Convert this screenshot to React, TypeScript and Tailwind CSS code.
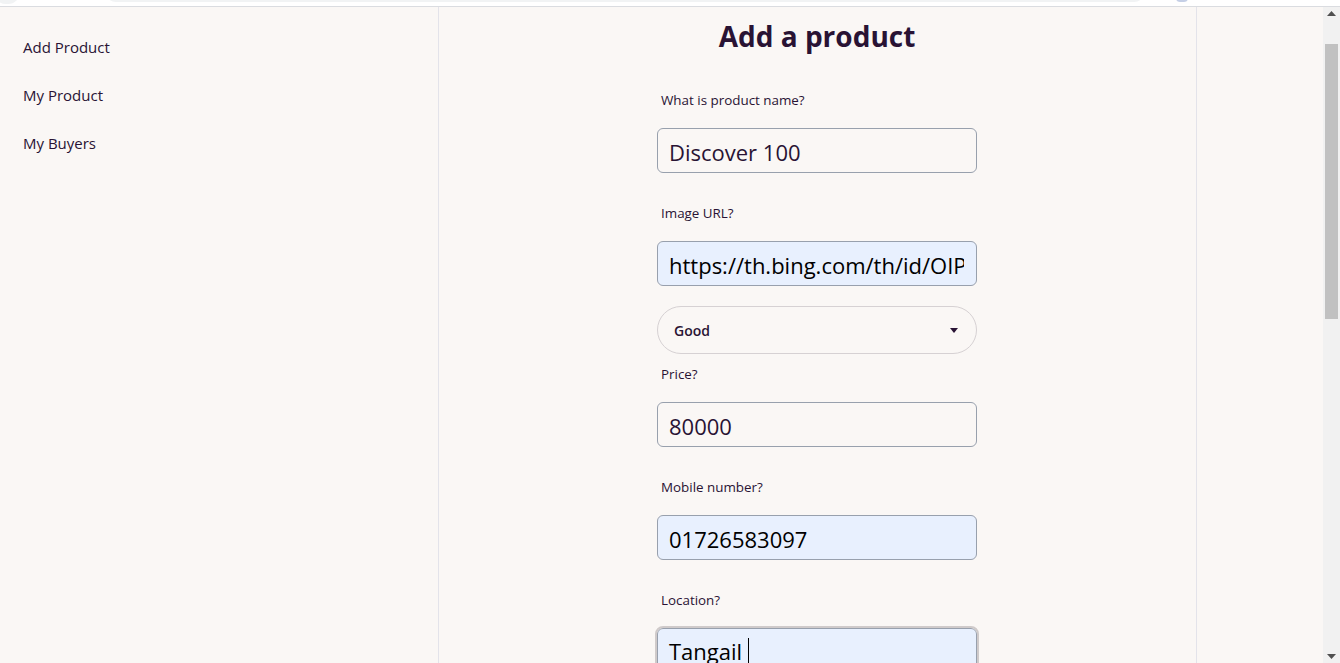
import React from "react";

const labelCls = "h-9 flex items-center px-1 pt-px text-[13.4px] text-[#291334]";
const inputBase =
  "block w-full h-[45px] rounded-md border border-[#98a0ad] pl-[11px] pr-3 pt-[2px] text-[22px] outline-none";

function Field({ label, value, filled }: { label: string; value: string; filled?: boolean }) {
  return (
    <div className="flex flex-col">
      <label className={labelCls}>{label}</label>
      <input
        readOnly
        value={value}
        className={`${inputBase} mt-[10px] ${filled ? "bg-[#e8f0fe] text-black" : "bg-[#faf7f5] text-[#291334]"}`}
      />
    </div>
  );
}

export default function App() {
  return (
    <div className="w-[1340px] h-[663px] overflow-hidden bg-[#faf7f5] font-['Open_Sans',sans-serif] text-[#291334]">
      {/* browser chrome remnant */}
      <div className="relative h-[7px] bg-white border-b border-[#dadce0] overflow-hidden">
        <div className="absolute left-[-6px] top-[-20px] w-[26px] h-[24px] rounded-full bg-[#f1f3f4]" />
        <div className="absolute left-[105px] top-[-20px] w-[1040px] h-[22px] rounded-full bg-[#f1f3f4]" />
        <div className="absolute left-[1176px] top-[-6px] w-[12px] h-[8px] rounded-sm bg-[#c5cfe6]" />
      </div>

      <div className="flex h-[656px]">
        <div className="flex flex-1">
          {/* sidebar */}
          <aside className="w-[439px] border-r border-[#e3e3ea] pt-4 flex flex-col">
            {["Add Product", "My Product", "My Buyers"].map((item) => (
              <a key={item} className="h-12 flex items-center pl-[23px] text-[15px] text-[#291334]">
                {item}
              </a>
            ))}
          </aside>

          {/* main */}
          <main className="w-[758px] border-r border-[#e3e3ea] flex flex-col items-center pt-[11px] pr-px">
            <h1 className="text-[28px] leading-9 font-bold">Add a product</h1>

            <div className="w-80 mt-[28px] flex flex-col">
              <Field label="What is product name?" value="Discover 100" />
              <div className="mt-[22px]">
                <Field label="Image URL?" value="https://th.bing.com/th/id/OIP.abc123" filled />
              </div>

              <div className="mt-5 h-12 rounded-full border border-[#d6d1d3] flex items-center justify-between pl-4 pr-[18px]">
                <span className="text-[14px] font-semibold">Good</span>
                <svg width="8" height="5" viewBox="0 0 8 5">
                  <path d="M0 0h8L4 5z" fill="#291334" />
                </svg>
              </div>

              <div className="mt-[2px]">
                <Field label="Price?" value="80000" />
              </div>
              <div className="mt-[22px]">
                <Field label="Mobile number?" value="01726583097" filled />
              </div>
              <div className="mt-[22px] flex flex-col">
                <label className={labelCls}>Location?</label>
                <div className="mt-[10px] h-[45px] rounded-md border border-[#98a0ad] bg-[#e8f0fe] outline-2 outline-[#cfcaca] outline-offset-0 pl-[11px] pt-[2px] flex items-center text-[22px] text-black">
                  <span>Tangail</span>
                  <span className="ml-[6px] w-px h-[27px] bg-black" />
                </div>
              </div>
            </div>
          </main>
          <div className="flex-1" />
        </div>

        {/* scrollbar */}
        <div className="w-[17px] bg-[#f1f1f1] flex flex-col items-center justify-between py-[4px]">
          <svg width="9" height="5" viewBox="0 0 9 5">
            <path d="M4.5 0L9 5H0z" fill="#505050" />
          </svg>
          <div className="w-[13px] h-[275px] bg-[#c1c1c1] mb-[300px] -mt-[7px]" />
          <svg width="9" height="5" viewBox="0 0 9 5">
            <path d="M0 0h9L4.5 5z" fill="#505050" />
          </svg>
        </div>
      </div>
    </div>
  );
}
